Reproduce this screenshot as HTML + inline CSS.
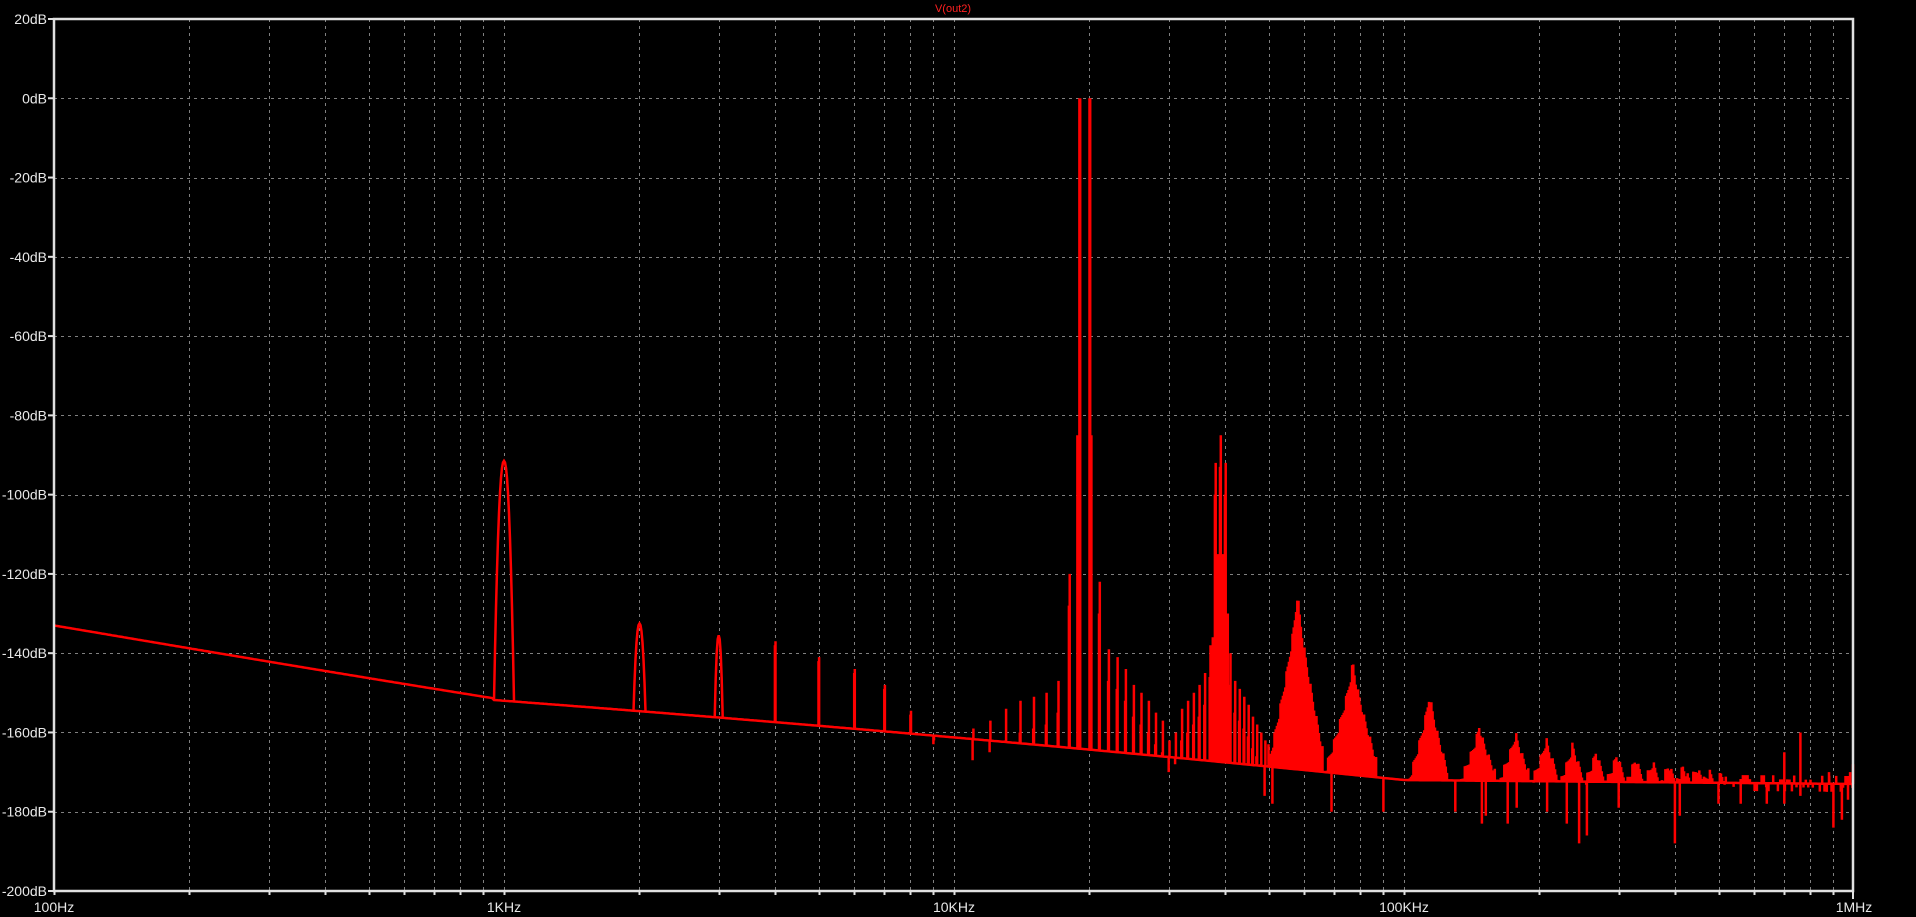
<!DOCTYPE html>
<html><head><meta charset="utf-8"><style>
html,body{margin:0;padding:0;background:#000;width:1916px;height:917px;overflow:hidden}
svg{display:block}
text{font-family:"Liberation Sans","DejaVu Sans",sans-serif;font-size:14px;fill:#e8e8e8}
</style></head><body>
<svg id="s" width="1916" height="917" xmlns="http://www.w3.org/2000/svg">
<text x="953" y="12" text-anchor="middle" style="fill:#ff2020;font-size:11px">V(out2)</text>
<g id="grid"></g>
<path id="tr" fill="none" stroke="#ff0000" stroke-width="2.5" stroke-linejoin="miter"/>
<g id="ax"></g>
</svg>
<script>
var L=54,R=1853,T=19,B=891,D=450;
function X(f){return L+D*Math.log10(f/100);}
function Y(db){return T+(20-db)*(B-T)/220;}
var ns="http://www.w3.org/2000/svg";
function el(p,t,a,txt){var e=document.createElementNS(ns,t);for(var k in a)e.setAttribute(k,a[k]);if(txt)e.textContent=txt;p.appendChild(e);return e;}
var g=document.getElementById('grid'),ax=document.getElementById('ax');
for(var dec=100;dec<1e6;dec*=10){for(var m=1;m<=9;m++){var f=dec*m;var x=Math.round(X(f))+0.5;
 if(f>100){el(g,'line',{x1:x,y1:T,x2:x,y2:B,stroke:'#808080','stroke-width':1,'stroke-dasharray':'3,4'});}
 el(ax,'line',{x1:x,y1:B,x2:x,y2:B+4,stroke:'#e0e0e0','stroke-width':2});}}
for(var db=0;db>-200;db-=20){var y=Math.round(Y(db))+0.5;el(g,'line',{x1:L,y1:y,x2:R,y2:y,stroke:'#808080','stroke-width':1,'stroke-dasharray':'3,4'});}
for(var db=20;db>=-200;db-=20){var y=Y(db);el(ax,'line',{x1:L-6,y1:y,x2:L,y2:y,stroke:'#e0e0e0','stroke-width':2});
 el(ax,'text',{x:L-7,y:y+5,'text-anchor':'end'},db+'dB');}
el(ax,'rect',{x:L,y:T,width:R-L,height:B-T,fill:'none',stroke:'#e0e0e0','stroke-width':2.5});
var labs=[[100,'100Hz'],[1000,'1KHz'],[1e4,'10KHz'],[1e5,'100KHz'],[1e6,'1MHz']];
labs.forEach(function(l){el(ax,'text',{x:X(l[0]),y:912,'text-anchor':'middle'},l[1]);});
el(ax,'line',{x1:R,y1:B,x2:R,y2:B+8,stroke:'#e0e0e0','stroke-width':2});
function fl(f){var lf=Math.log10(f);
 if(f<950){var t=(lf-2)/(Math.log10(950)-2);return -133-1.5*Math.sin(t*1.2)-17*t;}
 if(f<1e5){var t=(lf-3)/2;return -152-20*t+3*t*(1-t);}
 return -172-1*(lf-5);}
var d='';
var pts=[];for(var x=L;x<=R;x+=2){var f=100*Math.pow(10,(x-L)/D);pts.push([x,Y(fl(f))]);}
d+='M'+pts.map(function(p){return p[0].toFixed(1)+' '+p[1].toFixed(1)}).join(' L');
function hump(fc,pk,hw){var xc=X(fc);var s='M'+(xc-hw)+' '+Y(fl(fc*0.95));
 for(var i=-hw;i<=hw;i+=1){var t=i/hw;var v=pk+(fl(fc)-pk)*Math.pow(Math.abs(t),2.2);s+=' L'+(xc+i).toFixed(1)+' '+Y(v).toFixed(1);}
 s+=' L'+(xc+hw)+' '+Y(fl(fc*1.05));return s;}
d+=hump(1000,-91.5,10);d+=hump(2000,-132.5,6);d+=hump(3000,-135.5,4);
function spike(f,pk,lo){var x=X(f).toFixed(1);return ' M'+x+' '+Y(lo!==undefined?lo:fl(f)).toFixed(1)+' L'+x+' '+Y(pk).toFixed(1);}
[[4000,-138],[5000,-142],[6000,-145],[7000,-149],[8000,-155.5],[9000,-163]].forEach(function(s){d+=spike(s[0],s[1])+spike(s[0]*1.003,s[1]+1);});
var near={11:-167,12:-165,13:-162,14:-160,15:-159,16:-158,17:-155,18:-128,19:0,20:0,21:-130,22:-147,23:-149,24:-152,25:-156,26:-158,27:-160,28:-163,29:-165,30:-170,
31:-168,32:-162,33:-160,34:-158,35:-156,36:-153,37:-146,38:-100,39:-93,40:-100,41:-148,42:-155,43:-157,44:-159,45:-161,46:-164,47:-166,48:-168,49:-170};
for(var k in near){d+=spike(k*1000,near[k]);d+=spike(k*1000*1.004,near[k]+(k==19||k==20?0:8));}
d+=spike(18800,-85)+spike(20200,-85)+spike(37600,-136)+spike(38600,-115)+spike(39600,-115)+spike(40600,-130);
var lobes=[[58e3,-125,8e3],[77e3,-143,10e3],[114e3,-150.5,11e3],[147e3,-159,13e3],[177e3,-161,13e3],[207e3,-162.5,13e3],[237e3,-164,13e3],[267e3,-165.5,13e3],[297e3,-166.5,13e3],[327e3,-167.5,13e3],[357e3,-168.5,13e3],[387e3,-169,13e3],[417e3,-169.5,13e3],[447e3,-170,13e3],[477e3,-170.5,13e3],[507e3,-171,13e3]];
lobes.forEach(function(l){var x0=X(l[0]-l[2]),x1=X(l[0]+l[2]),xc=X(l[0]);
 for(var x=x0;x<=x1;x+=1.2){var t=Math.abs(x-xc)/Math.max(xc-x0,x1-xc);var f=100*Math.pow(10,(x-L)/D);var v=l[1]+(fl(f)-l[1])*Math.pow(t,0.75);
  var j=((x*7)%3)-1;d+=spike(f,v+j);}});
d+=spike(50e3,-163)+spike(52e3,-160)+spike(54e3,-157);
[[49e3,-176],[51e3,-178],[69e3,-180],[90e3,-180],[130e3,-180],[149e3,-183],[152e3,-181],[170e3,-183],[178e3,-179],[208e3,-180],[230e3,-183],[245e3,-188],[255e3,-186],[300e3,-179],[400e3,-188],[410e3,-181],[500e3,-178],[560e3,-178],[640e3,-178],[700e3,-178],[760e3,-176],[870e3,-175],[900e3,-184],[940e3,-182],[970e3,-177]].forEach(function(p){var f=p[0];d+=spike(f,p[1],fl(f));});
[[700e3,-165],[760e3,-160],[880e3,-170],[980e3,-170],[995e3,-168]].forEach(function(p){d+=spike(p[0],p[1]);});
for(var f=540e3;f<1e6;f*=1.012){var v=fl(f)+((Math.sin(f*0.001)*3)|0);d+=spike(f,v);}
document.getElementById('tr').setAttribute('d',d);
</script>
</body></html>
